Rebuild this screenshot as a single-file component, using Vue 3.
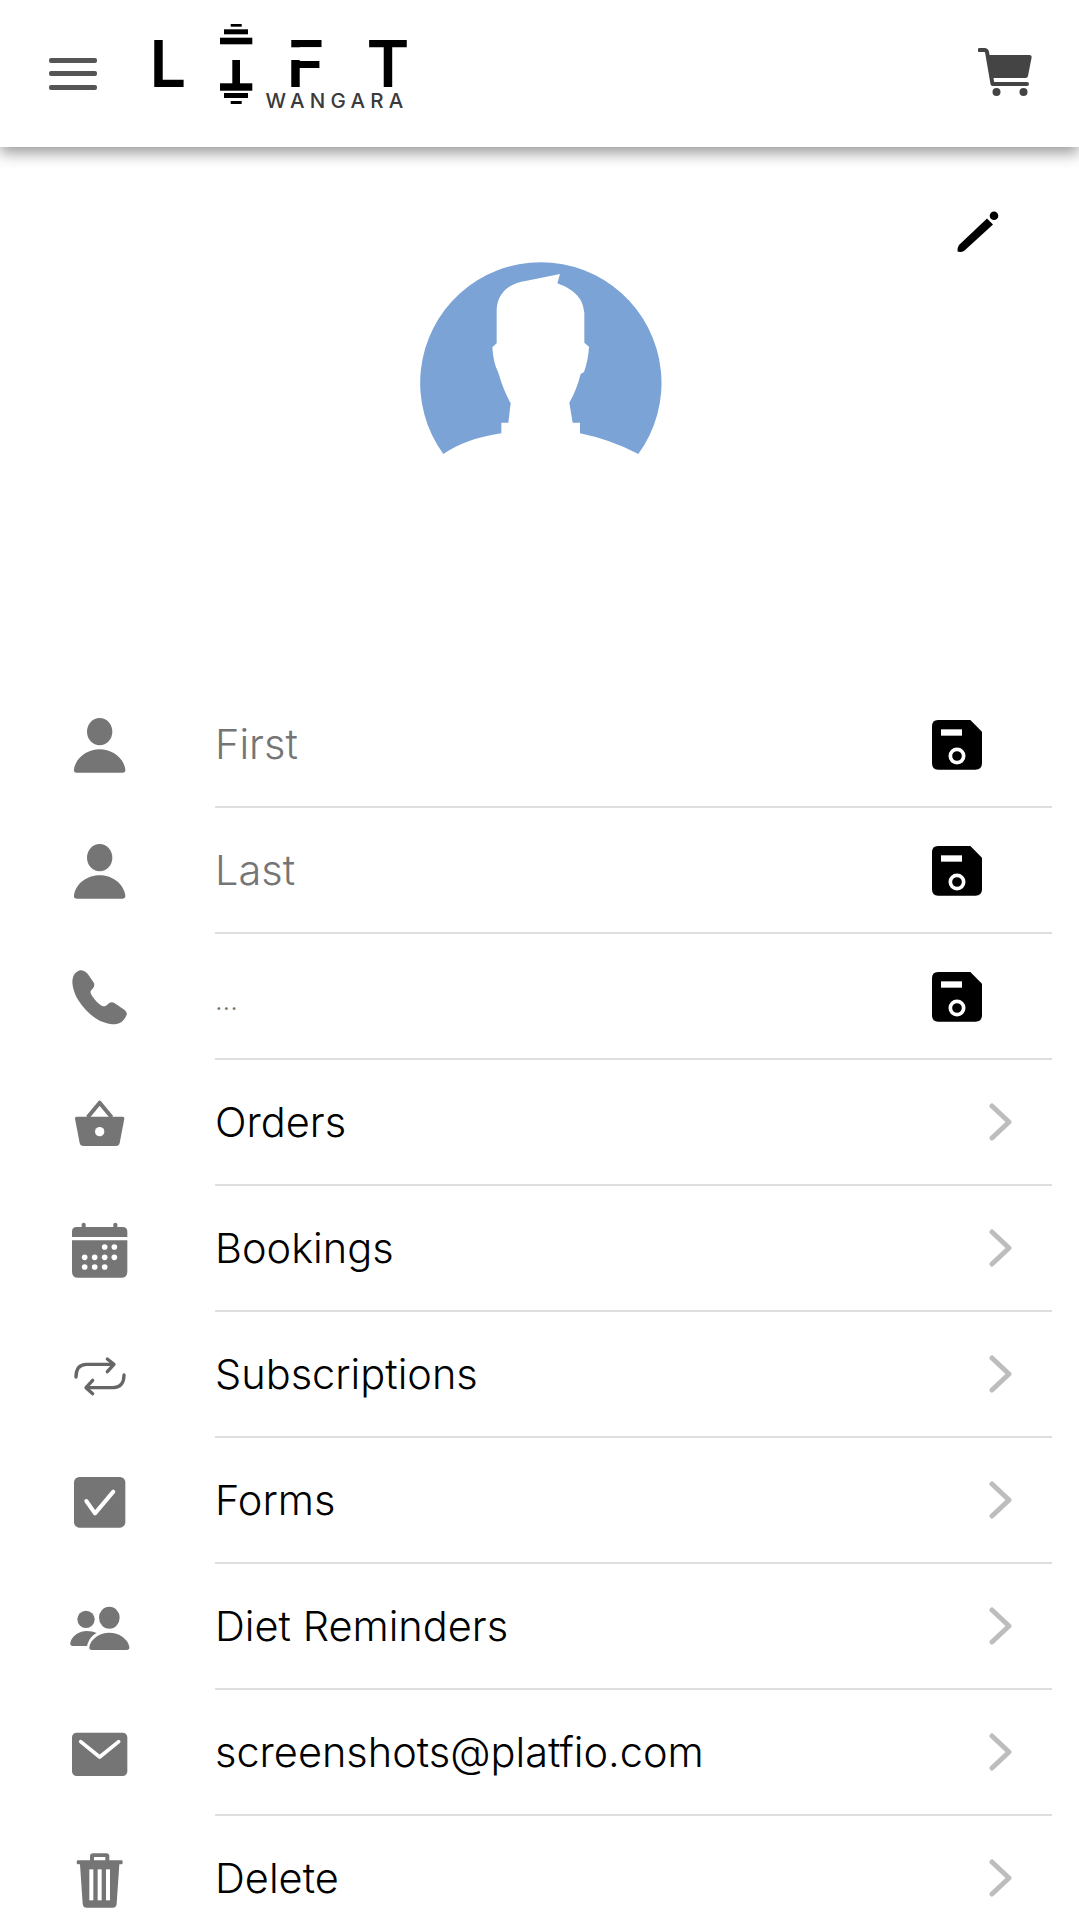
<script setup>
const rows = [
  { icon: 'person', text: 'First', placeholder: true, action: 'save' },
  { icon: 'person', text: 'Last', placeholder: true, action: 'save' },
  { icon: 'phone', text: '...', placeholder: true, small: true, action: 'save' },
  { icon: 'basket', text: 'Orders', action: 'open' },
  { icon: 'calendar', text: 'Bookings', action: 'open' },
  { icon: 'repeat', text: 'Subscriptions', action: 'open' },
  { icon: 'check', text: 'Forms', action: 'open' },
  { icon: 'group', text: 'Diet Reminders', action: 'open' },
  { icon: 'mail', text: 'screenshots@platfio.com', action: 'open' },
  { icon: 'trash', text: 'Delete', action: 'open' }
]

// calendar dots: x, y
const calendarDots = [
  [104, 84], [133, 84],
  [44, 115], [74, 115], [104, 115], [133, 115],
  [44, 144], [74, 144], [104, 144]
]
</script>

<template>
  <div class="page">
    <header class="topbar">
      <div class="menu">
        <span></span>
        <span></span>
        <span></span>
      </div>
      <svg class="logo" viewBox="135 10 290 110" width="290" height="110">
        <text x="149.6" y="87" class="logo-letter">L</text>
        <rect x="230.7" y="24" width="11" height="2.7" />
        <rect x="224" y="29.3" width="24" height="5" />
        <rect x="220" y="37.7" width="32.3" height="6.6" />
        <rect x="232.3" y="60" width="7.7" height="24" />
        <rect x="220" y="83.3" width="32.3" height="7.4" />
        <rect x="224" y="93" width="24" height="5" />
        <rect x="230.7" y="101" width="11" height="3" />
        <text x="286.5" y="87" class="logo-letter">F</text>
        <rect x="290" y="47.3" width="36" height="12.7" fill="#fff" />
        <text x="366.5" y="87" class="logo-letter">T</text>
        <text x="265.5" y="107.7" class="logo-sub">WANGARA</text>
      </svg>
      <svg class="cart" viewBox="0 0 54 48" width="54" height="48">
        <path d="M1.5 2H6.5Q8.5 2 9 4L14.5 36H49" fill="none" stroke="#444" stroke-width="4" stroke-linecap="round" stroke-linejoin="round" />
        <path d="M10 7H51.5Q54 7 53.6 9.5L50 28Q49.5 30 47.5 30H14Z" fill="#444" />
        <circle cx="18.5" cy="44" r="4" fill="#444" />
        <circle cx="45.5" cy="44" r="4" fill="#444" />
      </svg>
    </header>

    <section class="profile">
      <svg class="edit" viewBox="950 205 55 55" width="55" height="55">
        <path d="M957.5 251.5Q957 248 959 245L987 218.5L993 224.5L964 251Q961 252.5 957.5 251.5Z" fill="#000" />
        <circle cx="994" cy="215.7" r="4.3" fill="#000" />
      </svg>
      <svg class="avatar" viewBox="0 30 840 600" width="280" height="200">
        <path
          d="M130 612A362 362 0 1 1 715 612Q630 568 540 550L540 518L518 518L508 458Q530 420 542 372L552 366Q565 330 567 290L553 278L553 190C550 150 530 122 472 100L480 72L380 92C325 100 292 130 290 180L290 280L277 292Q280 340 295 368Q310 420 332 460L325 518L304 518L304 550Q200 565 130 612Z"
          fill="#7ba3d6"
        />
      </svg>
    </section>

    <div v-for="row in rows" :key="row.text" class="row">
      <svg class="row-icon" viewBox="0 0 180 180" width="60" height="60">
        <g v-if="row.icon === 'person'" fill="#757575">
          <ellipse cx="89" cy="50" rx="38" ry="41" />
          <path d="M20 173Q10 173 12 163C18 125 55 103 89 103C123 103 160 125 166 163Q167 173 158 173Z" />
        </g>
        <path
          v-else-if="row.icon === 'phone'"
          fill="#757575"
          d="M30 10C40 8 50 15 56 25L70 45Q76 55 70 62L62 72Q60 78 66 86C75 100 85 110 95 116Q102 120 108 116L118 108Q125 104 133 108L163 128Q172 135 170 143Q160 170 135 172C90 172 50 140 25 100C10 75 5 50 8 35Q12 15 30 10Z"
        />
        <g v-else-if="row.icon === 'basket'">
          <path d="M53 73L89 29L125 73" fill="none" stroke="#757575" stroke-width="12" stroke-linejoin="round" />
          <path d="M20 71H158Q164 71 163 77L149 150Q147 159 138 159H40Q31 159 29 150L15 77Q14 71 20 71Z" fill="#757575" />
          <circle cx="89" cy="116" r="14" fill="#fff" />
        </g>
        <g v-else-if="row.icon === 'calendar'">
          <path d="M6 54V38Q6 24 20 24H35V16Q35 11 41 11Q47 11 47 16V24H130V16Q130 11 136 11Q142 11 142 16V24H158Q172 24 172 38V54Z" fill="#757575" />
          <path d="M6 64H172V158Q172 176 154 176H24Q6 176 6 158Z" fill="#757575" />
          <circle v-for="dot in calendarDots" :key="dot.join()" :cx="dot[0]" :cy="dot[1]" r="8.5" fill="#fff" />
        </g>
        <g v-else-if="row.icon === 'repeat'" fill="none" stroke="#666" stroke-width="10" stroke-linecap="round" stroke-linejoin="round">
          <path d="M18 96C18 70 30 58 50 58H130" />
          <path d="M112 42L132 58L112 80" />
          <path d="M162 90C162 115 150 128 130 128H50" />
          <path d="M68 106L48 128L68 146" />
        </g>
        <g v-else-if="row.icon === 'check'">
          <rect x="12" y="18" width="154" height="152" rx="16" fill="#757575" />
          <path d="M49 90L75 127L130 62" fill="none" stroke="#fff" stroke-width="12" stroke-linecap="round" stroke-linejoin="round" />
        </g>
        <g v-else-if="row.icon === 'group'" fill="#757575">
          <ellipse cx="118" cy="62" rx="31" ry="33" />
          <circle cx="48" cy="67" r="26" />
          <path d="M66 159Q57 159 58 150C62 125 90 107 118 107C146 107 174 125 178 150Q179 159 170 159Z" />
          <path d="M7 147Q-1 147 1 137C6 115 30 102 50 102Q68 102 80 108C65 115 55 130 51 147Z" />
        </g>
        <g v-else-if="row.icon === 'mail'">
          <rect x="6" y="29" width="166" height="130" rx="14" fill="#757575" />
          <path d="M32 56L89 102L146 56" fill="none" stroke="#fff" stroke-width="11" stroke-linecap="round" stroke-linejoin="round" />
        </g>
        <g v-else-if="row.icon === 'trash'">
          <path d="M60 34V22Q60 13 69 13H109Q118 13 118 22V34H155Q158 34 158 40Q158 46 155 46H148L140 164Q139 176 128 176H50Q39 176 38 164L30 46H23Q20 46 20 40Q20 34 23 34ZM72 34H106V24H72Z" fill="#757575" fill-rule="evenodd" />
          <rect x="58" y="61" width="12" height="93" fill="#fff" />
          <rect x="83" y="61" width="12" height="93" fill="#fff" />
          <rect x="108" y="61" width="12" height="93" fill="#fff" />
        </g>
      </svg>
      <div class="row-body">
        <div class="row-text" :class="{ placeholder: row.placeholder, small: row.small }">{{ row.text }}</div>
        <svg v-if="row.action === 'save'" class="save" viewBox="0 0 150 150" width="50" height="50">
          <path d="M18 0H115L150 35V130Q150 149 130 149H18Q0 149 0 130V18Q0 0 18 0Z" fill="#000" />
          <rect x="27" y="28" width="63" height="19" fill="#fff" />
          <circle cx="75" cy="108" r="20" fill="none" stroke="#fff" stroke-width="11" />
        </svg>
        <svg v-else class="chevron" viewBox="0 0 24 40" width="24" height="40">
          <path d="M3 4L20 20L3 36" fill="none" stroke="#bdbdbd" stroke-width="5" stroke-linecap="round" stroke-linejoin="round" />
        </svg>
      </div>
    </div>
  </div>
</template>

<style>
html,
body {
  margin: 0;
  background: #fff;
  overflow: hidden;
}
</style>

<style scoped>
.page {
  height: 100vh;
  overflow: hidden;
  background: #fff;
  font-family: Inter, Lato, sans-serif;
}
.topbar {
  height: 147px;
  box-sizing: border-box;
  display: flex;
  align-items: center;
  padding: 0 48px 0 49px;
  background: #fff;
  box-shadow: 0 6px 14px rgba(0, 0, 0, 0.4);
}
.menu {
  width: 48px;
  display: flex;
  flex-direction: column;
  gap: 8.5px;
}
.menu span {
  height: 5px;
  border-radius: 2px;
  background: #555;
}
.logo {
  margin-left: 38px;
  margin-top: -17px;
}
.logo-letter {
  font-family: Inter, sans-serif;
  font-size: 65px;
  font-weight: 600;
  fill: #000;
}
.logo-sub {
  font-family: Inter, sans-serif;
  font-size: 20.5px;
  font-weight: 500;
  letter-spacing: 5.2px;
  fill: #3a3a3a;
}
.cart {
  margin-left: auto;
  margin-right: -1px;
  margin-top: -3px;
}
.profile {
  height: 535px;
  box-sizing: border-box;
  display: flex;
  flex-direction: column;
  align-items: center;
  padding-top: 58px;
}
.edit {
  align-self: flex-end;
  margin-right: 74px;
}
.row {
  height: 126px;
  display: flex;
  align-items: stretch;
  padding-left: 70px;
}
.row-icon {
  flex: none;
  align-self: center;
  margin-right: 85px;
}
.row-body {
  flex: none;
  width: 837px;
  box-sizing: border-box;
  display: flex;
  align-items: center;
  border-bottom: 2px solid #dedede;
}
.row-text {
  flex: 1;
  font-size: 41.5px;
  font-weight: 300;
  color: #000;
}
.row-text.placeholder {
  color: #757575;
}
.row-text.small {
  font-size: 27px;
  padding-top: 8px;
}
.save {
  margin-top: 2px;
  margin-right: 70px;
}
.chevron {
  margin-right: 39px;
}
</style>
